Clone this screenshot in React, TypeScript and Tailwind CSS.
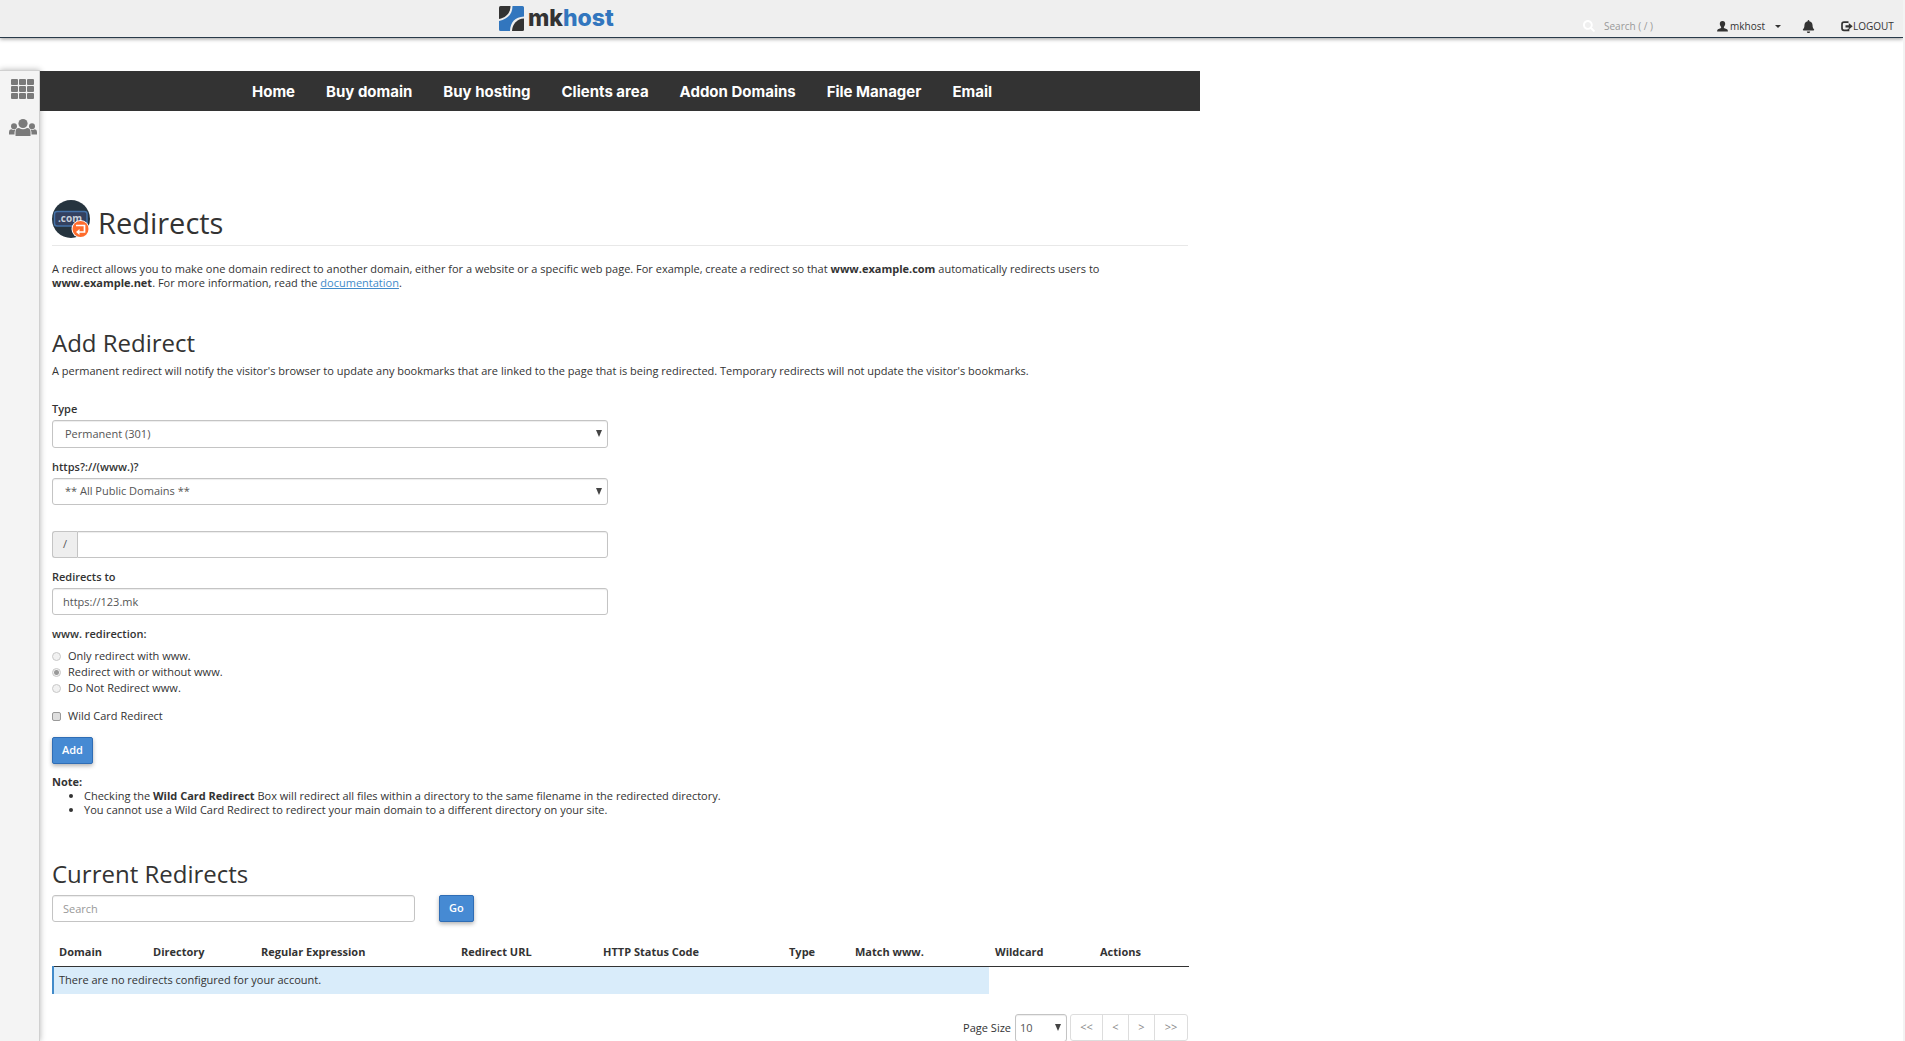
import React, { useState } from 'react';
import { FaBell, FaSearch } from 'react-icons/fa';

const navLinks = ['Home', 'Buy domain', 'Buy hosting', 'Clients area', 'Addon Domains', 'File Manager', 'Email'];

const wwwOptions = [
  { value: 'only', label: 'Only redirect with www.' },
  { value: 'both', label: 'Redirect with or without www.' },
  { value: 'none', label: 'Do Not Redirect www.' }
];

const columns = [
  { title: 'Domain', width: 'w-[94px]' },
  { title: 'Directory', width: 'w-[108px]' },
  { title: 'Regular Expression', width: 'w-[200px]' },
  { title: 'Redirect URL', width: 'w-[142px]' },
  { title: 'HTTP Status Code', width: 'w-[186px]' },
  { title: 'Type', width: 'w-[66px]' },
  { title: 'Match www.', width: 'w-[140px]' },
  { title: 'Wildcard', width: 'w-[105px]' },
  { title: 'Actions', width: 'w-[95px]' }
];

const pagerButtons = [
  { text: '<<', label: 'First page', width: 'w-8' },
  { text: '<', label: 'Previous page', width: 'w-[26px]' },
  { text: '>', label: 'Next page', width: 'w-[26px]' },
  { text: '>>', label: 'Last page', width: 'w-8' }
];

const fieldClass =
  'block w-full rounded-[3px] border border-[#c4c4c4] bg-white px-[10px] text-[#555] shadow-[inset_0_1px_1px_rgba(0,0,0,0.075)] outline-none focus:border-[#66afe9]';

const buttonClass =
  'h-[27px] rounded-[2px] border border-[#2f6db5] bg-[#468ad3] px-[9px] font-semibold text-white shadow-[0_2px_4px_rgba(0,0,0,0.3)] hover:bg-[#3277c3]';

const LogoMark: React.FC = () => (
  <svg viewBox="0 0 25 25" className="w-[25px] h-[25px]" aria-hidden="true">
    <path d="M1.5 0H11.5C11.5 7 7 12 0 13V1.5Q0 0 1.5 0Z" fill="#333" />
    <path d="M13.5 0H23.5Q25 0 25 1.5V10.5C16 11 11.5 16 11 25H1.5Q0 25 0 23.5V15C8.5 13.5 13.5 8 13.5 0Z" fill="#3276be" />
    <path d="M25 12.5V23.5Q25 25 23.5 25H13C13.5 17.5 18 13 25 12.5Z" fill="#333" />
  </svg>
);

const UserIcon: React.FC = () => (
  <svg viewBox="0 0 11 11" className="w-[11px] h-[11px]" fill="currentColor" aria-hidden="true">
    <path d="M5.5 0C7.4 0 8.200 1.100 8.200 2.800C8.200 4.200 7.500 5.300 6.900 5.900V7L10 8.300Q10.900 8.800 10.900 10.500H.1Q.1 8.800 1 8.300L4.100 7V5.900C3.500 5.300 2.800 4.200 2.800 2.800C2.800 1.100 3.600 0 5.500 0Z" />
  </svg>
);

const LogoutIcon: React.FC = () => (
  <svg viewBox="0 0 12 11" className="w-3 h-[11px]" aria-hidden="true">
    <path d="M7.5 1.2H3Q1 1.2 1 3.2V7.3Q1 9.3 3 9.3H7.5V7.8" fill="none" stroke="#333" strokeWidth="1.7" />
    <path d="M4.5 4.2H7.8V2L11.7 5.3L7.8 8.6V6.4H4.5Z" fill="#333" />
  </svg>
);

const GridIcon: React.FC = () => (
  <svg viewBox="0 0 23 20" className="w-[23px] h-5" fill="#7a7a7a" aria-hidden="true">
    {[0, 7, 14].map((y) =>
      [0, 8, 16].map((x) => <rect key={`${x}-${y}`} x={x} y={y} width="7" height="6" rx="1" />)
    )}
  </svg>
);

const PeopleIcon: React.FC = () => (
  <svg viewBox="0 0 28 17" className="w-7 h-[17px]" fill="#7a7a7a" aria-hidden="true">
    <ellipse cx="14" cy="4.5" rx="4.6" ry="4.5" />
    <path d="M6.5 17V13Q6.5 9 10 9Q14 11.5 18 9Q21.5 9 21.5 13V17Z" />
    <circle cx="5" cy="7.2" r="3" />
    <circle cx="23" cy="7.2" r="3" />
    <path d="M0 15.5V13Q0 10.5 2.2 10.3Q4.5 11.5 6.3 10.5Q5.5 12 5.5 15.5Z" />
    <path d="M28 15.5V13Q28 10.5 25.8 10.3Q23.5 11.5 21.7 10.5Q22.5 12 22.5 15.5Z" />
  </svg>
);

const RedirectsIcon: React.FC = () => (
  <svg viewBox="0 0 38 38" className="w-[38px] h-[38px]" aria-hidden="true">
    <circle cx="19" cy="19" r="19" fill="#26343f" />
    <rect x="2.5" y="11.5" width="32.5" height="14.5" rx="2.5" fill="#33415f" stroke="#4472a8" strokeWidth="1.5" />
    <text x="6" y="22" fontSize="10" fontWeight="700" fontFamily="Open Sans, sans-serif" fill="#c9d0da">.com</text>
    <circle cx="28.5" cy="29" r="9" fill="#fff" />
    <circle cx="28.5" cy="29" r="8" fill="#ff6c2c" />
    <path d="M24 25.5H32.5V32H26" fill="none" stroke="#fff" strokeWidth="1.7" />
    <path d="M27.5 29L24 32L27.5 35Z" fill="#fff" />
  </svg>
);

const SelectArrow: React.FC = () => (
  <svg viewBox="0 0 6 7" className="pointer-events-none absolute right-[6px] top-[10px] w-[6px] h-[7px]" aria-hidden="true">
    <path d="M0 0H6L3 7Z" fill="#444" />
  </svg>
);

const Header: React.FC = () => (
  <header className="flex h-[38px] border-b border-[#293a4a] bg-[#efefef] shadow-[0_1px_4px_rgba(0,0,0,0.4)] text-[10px]">
    <div className="flex flex-1 items-start pt-[6px] pl-[499px]">
      <a href="#home" className="flex items-center gap-1">
        <LogoMark />
        <span className="font-['Inter'] text-[23px] leading-[25px] font-extrabold text-[#333]">
          mk<span className="text-[#3276be]">host</span>
        </span>
      </a>
    </div>
    <div className="flex items-stretch pt-[15px] leading-5">
      <label className="flex w-[141px] items-center gap-[9px] pl-[18px]">
        <FaSearch className="size-3 text-white" />
        <input
          type="text"
          aria-label="Search"
          placeholder="Search ( / )"
          className="w-[90px] bg-transparent outline-none placeholder:text-[#999]"
        />
      </label>
      <button type="button" className="flex w-[78px] items-center gap-[2px] pl-[11px]">
        <UserIcon />
        <span>mkhost</span>
        <span className="ml-2 border-x-[3px] border-t-[3px] border-x-transparent border-t-[#333]" />
      </button>
      <button type="button" aria-label="Notifications" className="flex w-11 items-center justify-end pr-[13px]">
        <FaBell className="size-[13px]" />
      </button>
      <a href="#logout" className="flex w-[75px] items-center pl-[13px]">
        <LogoutIcon />
        LOGOUT
      </a>
    </div>
  </header>
);

const AddRedirect: React.FC = () => {
  const [mode, setMode] = useState('both');

  return (
    <section className="mt-[37px]">
      <h2 className="text-2xl leading-8">Add Redirect</h2>
      <p className="mt-[5px] leading-[14px]">
        A permanent redirect will notify the visitor's browser to update any bookmarks that are linked to the page
        that is being redirected. Temporary redirects will not update the visitor's bookmarks.
      </p>

      <form className="mt-6" onSubmit={(e) => e.preventDefault()}>
        <div className="max-w-[556px]">
          <label htmlFor="type" className="block font-semibold leading-[14px] mb-1">Type</label>
          <div className="relative">
            <select id="type" className={`${fieldClass} h-7 appearance-none pl-3`}>
              <option>Permanent (301)</option>
              <option>Temporary (302)</option>
            </select>
            <SelectArrow />
          </div>

          <label htmlFor="domain" className="block font-semibold leading-[14px] mt-3 mb-1">https?://(www.)?</label>
          <div className="relative">
            <select id="domain" className={`${fieldClass} h-[27px] appearance-none pl-3`}>
              <option>** All Public Domains **</option>
            </select>
            <SelectArrow />
          </div>

          <div className="mt-[26px] flex">
            <label
              htmlFor="path"
              className="flex w-[26px] items-center justify-center rounded-l-[3px] border border-r-0 border-[#c4c4c4] bg-[#eee] text-[#555]"
            >
              /
            </label>
            <input id="path" type="text" className={`${fieldClass} h-[27px] rounded-l-none`} />
          </div>

          <label htmlFor="target" className="block font-semibold leading-[14px] mt-3 mb-1">Redirects to</label>
          <input id="target" type="text" defaultValue="https://123.mk" className={`${fieldClass} h-[27px]`} />
        </div>

        <fieldset className="mt-3">
          <legend className="font-semibold leading-[14px] mb-[7px]">www. redirection:</legend>
          {wwwOptions.map((option) => (
            <label key={option.value} className="flex h-4 items-center gap-[7px]">
              <input
                type="radio"
                name="www"
                checked={mode === option.value}
                onChange={() => setMode(option.value)}
                className="size-[9px] appearance-none rounded-full border border-[#c8c8c8] bg-[#f1f1f1] checked:bg-[radial-gradient(circle,#999_0_2px,#f1f1f1_3px)]"
              />
              {option.label}
            </label>
          ))}
        </fieldset>

        <label className="mt-3 flex h-4 items-center gap-[7px]">
          <input
            type="checkbox"
            className="size-[9px] appearance-none rounded-[2px] border border-[#999] bg-[#dedede] checked:bg-[#468ad3]"
          />
          Wild Card Redirect
        </label>

        <button type="submit" className={`${buttonClass} mt-[13px]`}>Add</button>
      </form>

      <div className="mt-[11px] leading-[14px]">
        <strong className="font-bold">Note:</strong>
        <ul className="list-disc pl-8">
          <li>
            Checking the <strong className="font-bold">Wild Card Redirect</strong> Box will redirect all files within
            a directory to the same filename in the redirected directory.
          </li>
          <li>You cannot use a Wild Card Redirect to redirect your main domain to a different directory on your site.</li>
        </ul>
      </div>
    </section>
  );
};

const CurrentRedirects: React.FC = () => (
  <section className="mt-[41px]">
    <h2 className="text-2xl leading-8">Current Redirects</h2>
    <form className="mt-[5px] flex gap-6" onSubmit={(e) => e.preventDefault()}>
      <div className="w-[363px]">
        <input
          type="text"
          aria-label="Search redirects"
          placeholder="Search"
          className={`${fieldClass} h-[27px] placeholder:text-[#999]`}
        />
      </div>
      <button type="submit" className={buttonClass}>Go</button>
    </form>

    <table className="mt-4 w-full table-fixed border-collapse text-left">
      <thead>
        <tr className="h-7 border-b border-[#333]">
          {columns.map((column) => (
            <th key={column.title} className={`${column.width} pl-[6px] font-bold whitespace-nowrap`}>
              {column.title}
            </th>
          ))}
        </tr>
      </thead>
      <tbody>
        <tr className="h-7">
          <td colSpan={7} className="border-l-2 border-[#428bca] bg-[#d9ecfa] pl-[5px]">
            There are no redirects configured for your account.
          </td>
        </tr>
      </tbody>
    </table>

    <div className="mt-5 flex items-start justify-end">
      <label htmlFor="page-size" className="mr-1 leading-7">Page Size</label>
      <div className="relative mr-[3px] w-[52px]">
        <select id="page-size" className={`${fieldClass} h-7 appearance-none pl-1`}>
          <option>10</option>
          <option>20</option>
          <option>50</option>
        </select>
        <SelectArrow />
      </div>
      <div className="flex divide-x divide-[#ddd] rounded-[3px] border border-[#ddd] text-[#888]">
        {pagerButtons.map((button) => (
          <button key={button.text} type="button" aria-label={button.label} className={`${button.width} h-[25px]`}>
            {button.text}
          </button>
        ))}
      </div>
    </div>
  </section>
);

const App: React.FC = () => {
  return (
    <div className="flex h-screen flex-col overflow-hidden border-r-2 border-[#f3f3f3] bg-white font-['Open_Sans',sans-serif] text-[11px] text-[#333]">
      <Header />
      <div className="mt-8 flex min-h-0 flex-1">
        <aside className="flex w-10 shrink-0 flex-col items-center gap-5 border-t border-r border-[#d0d0d0] bg-[#f4f4f4] pt-2 pl-[6px] shadow-[0_0_6px_rgba(0,0,0,0.3)]">
          <a href="#apps" aria-label="Home"><GridIcon /></a>
          <a href="#users" aria-label="User Manager"><PeopleIcon /></a>
        </aside>
        <div className="w-full max-w-[1160px] pt-px">
          <nav className="relative flex h-10 items-center gap-[31px] bg-[#333] pt-[2px] pl-[212px] font-['Inter'] text-[15px] font-bold text-white">
            {navLinks.map((link) => (
              <a key={link} href="#nav">{link}</a>
            ))}
          </nav>

          <main className="px-3 pt-[89px]">
            <div className="flex gap-2 border-b border-[#e8e8e8] pb-[3px]">
              <RedirectsIcon />
              <h1 className="pt-1 text-[29px] leading-[38px]">Redirects</h1>
            </div>
            <p className="mt-4 leading-[14px]">
              A redirect allows you to make one domain redirect to another domain, either for a website or a specific
              web page. For example, create a redirect so that <strong className="font-bold">www.example.com</strong>{' '}
              automatically redirects users to <strong className="font-bold">www.example.net</strong>. For more
              information, read the <a href="#docs" className="text-[#428bca] underline">documentation</a>.
            </p>
            <AddRedirect />
            <CurrentRedirects />
          </main>
        </div>
      </div>
    </div>
  );
};

export default App;
